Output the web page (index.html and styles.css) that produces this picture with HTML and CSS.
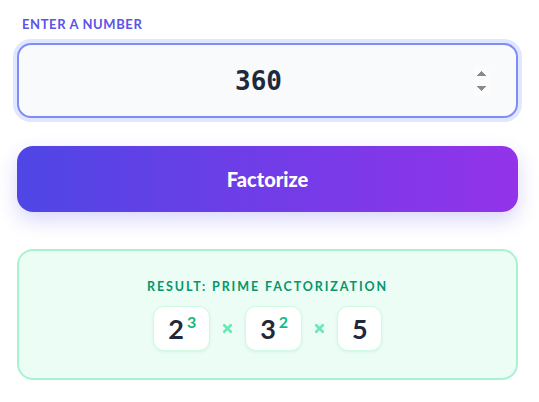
FILE: index.html
```html
<!DOCTYPE html>
<html>
<head>
<meta charset="utf-8">
<link rel="stylesheet" href="styles.css">
</head>
<body>
<main class="app">
  <label class="field-label" for="num">ENTER A NUMBER</label>
  <input class="num-input" id="num" type="number" value="360" autofocus>
  <button class="btn">Factorize</button>
  <section class="result">
    <div class="result-title">RESULT: PRIME FACTORIZATION</div>
    <div class="factors">
      <div class="chip"><span class="base">2</span><sup class="exp">3</sup></div>
      <svg class="times" viewBox="0 0 10 10" aria-label="×"><path d="M2 2 L8 8 M8 2 L2 8"/></svg>
      <div class="chip"><span class="base">3</span><sup class="exp">2</sup></div>
      <svg class="times" viewBox="0 0 10 10" aria-label="×"><path d="M2 2 L8 8 M8 2 L2 8"/></svg>
      <div class="chip"><span class="base">5</span></div>
    </div>
  </section>
</main>
</body>
</html>
```
FILE: styles.css
```css
html, body {
  margin: 0;
  padding: 0;
  background: #ffffff;
}
body {
  font-family: Lato, "Noto Sans", sans-serif;
}
.app {
  display: flex;
  flex-direction: column;
  padding: 16px 21px 0 17px;
}
.field-label {
  font-size: 13px;
  line-height: 16px;
  font-weight: 700;
  letter-spacing: 0.6px;
  color: #5a54e8;
  padding-left: 5px;
  margin-bottom: 11px;
}
.num-input {
  box-sizing: border-box;
  height: 75px;
  width: 100%;
  border: 2px solid #818cf8;
  border-radius: 14px;
  box-shadow: 0 0 0 4px #e0e7ff;
  background: #f8fafc;
  outline: none;
  padding: 0 27px 0 24px;
  font-family: "DejaVu Sans Mono", monospace;
  font-weight: 700;
  font-size: 26px;
  color: #1e293b;
  text-align: center;
  caret-color: #1e293b;
}
.btn {
  margin-top: 28px;
  height: 66px;
  border: none;
  border-radius: 16px;
  background: linear-gradient(90deg, #4f46e5 0%, #9333ea 100%);
  box-shadow: 0 8px 20px rgba(79, 70, 229, 0.22);
  color: #ffffff;
  font-family: Lato, "Noto Sans", sans-serif;
  font-weight: 900;
  font-size: 20px;
}
.result {
  margin-top: 37px;
  box-sizing: border-box;
  height: 131px;
  border: 2px solid #a7f3d0;
  border-radius: 16px;
  background: #ecfdf5;
  display: flex;
  flex-direction: column;
  align-items: center;
  padding-top: 28px;
}
.result-title {
  font-size: 12.5px;
  line-height: 16px;
  font-weight: 700;
  letter-spacing: 1.9px;
  color: #059669;
}
.factors {
  margin-top: 11px;
  display: flex;
  align-items: center;
  gap: 12px;
}
.chip {
  box-sizing: border-box;
  height: 45px;
  padding: 0 13px 0 14px;
  background: #ffffff;
  border: 1px solid #d1fae5;
  border-radius: 11px;
  box-shadow: 0 1px 3px rgba(16, 185, 129, 0.12);
  display: flex;
  align-items: center;
}
.base {
  font-size: 27px;
  font-weight: 700;
  color: #1e293b;
  line-height: 1;
}
.exp {
  font-size: 16px;
  font-weight: 700;
  color: #10b981;
  margin-left: 3px;
  vertical-align: baseline;
  position: relative;
  top: -7px;
  line-height: 1;
}
.times {
  width: 11px;
  height: 11px;
  fill: none;
  stroke: #6ee7b7;
  stroke-width: 2.4;
  stroke-linecap: round;
}
```
